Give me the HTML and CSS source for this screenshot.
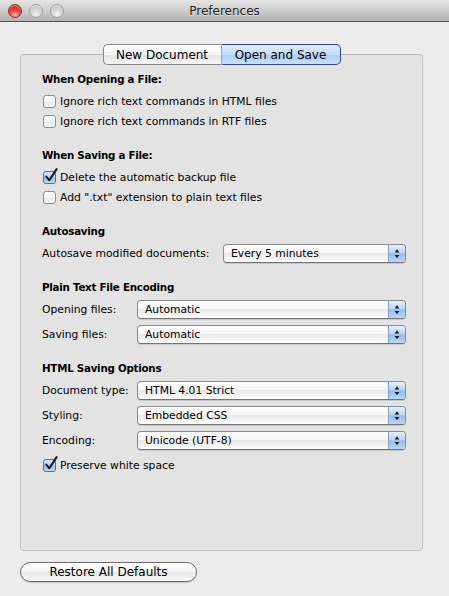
FILE: index.html
```html
<!DOCTYPE html>
<html lang="en">
<head>
<meta charset="utf-8">
<title>Preferences</title>
<link rel="stylesheet" href="styles.css">
</head>
<body>
<div class="window">
  <header class="titlebar">
    <div class="lights">
      <span class="light light-close"></span>
      <span class="light"></span>
      <span class="light"></span>
    </div>
    <div class="title">Preferences</div>
    <div></div>
  </header>

  <main class="content">
    <nav class="tabs">
      <span class="tab">New Document</span>
      <span class="tab tab-selected">Open and Save</span>
    </nav>

    <div class="group">
      <section class="section">
        <h2 class="heading">When Opening a File:</h2>
        <div class="check"><span class="box"></span><span>Ignore rich text commands in HTML files</span></div>
        <div class="check"><span class="box"></span><span>Ignore rich text commands in RTF files</span></div>
      </section>

      <section class="section">
        <h2 class="heading">When Saving a File:</h2>
        <div class="check"><span class="box box-on"><svg class="tick" viewBox="0 0 16 16"><path d="M3.2 8.6 L6.4 12.2 L13.6 1.2" /></svg></span><span>Delete the automatic backup file</span></div>
        <div class="check"><span class="box"></span><span>Add ".txt" extension to plain text files</span></div>
      </section>

      <section class="section">
        <h2 class="heading">Autosaving</h2>
        <div class="row">
          <span class="label label-wide">Autosave modified documents:</span>
          <div class="popup"><span class="popup-value">Every 5 minutes</span><span class="popup-arrows"><svg viewBox="0 0 16 18"><path d="M5.5 8 L8 4.5 L10.5 8 Z M5.5 10.5 L8 14 L10.5 10.5 Z"/></svg></span></div>
        </div>
      </section>

      <section class="section">
        <h2 class="heading">Plain Text File Encoding</h2>
        <div class="rows">
          <div class="row">
            <span class="label">Opening files:</span>
            <div class="popup"><span class="popup-value">Automatic</span><span class="popup-arrows"><svg viewBox="0 0 16 18"><path d="M5.5 8 L8 4.5 L10.5 8 Z M5.5 10.5 L8 14 L10.5 10.5 Z"/></svg></span></div>
          </div>
          <div class="row">
            <span class="label">Saving files:</span>
            <div class="popup"><span class="popup-value">Automatic</span><span class="popup-arrows"><svg viewBox="0 0 16 18"><path d="M5.5 8 L8 4.5 L10.5 8 Z M5.5 10.5 L8 14 L10.5 10.5 Z"/></svg></span></div>
          </div>
        </div>
      </section>

      <section class="section">
        <h2 class="heading">HTML Saving Options</h2>
        <div class="rows">
          <div class="row">
            <span class="label">Document type:</span>
            <div class="popup"><span class="popup-value">HTML 4.01 Strict</span><span class="popup-arrows"><svg viewBox="0 0 16 18"><path d="M5.5 8 L8 4.5 L10.5 8 Z M5.5 10.5 L8 14 L10.5 10.5 Z"/></svg></span></div>
          </div>
          <div class="row">
            <span class="label">Styling:</span>
            <div class="popup"><span class="popup-value">Embedded CSS</span><span class="popup-arrows"><svg viewBox="0 0 16 18"><path d="M5.5 8 L8 4.5 L10.5 8 Z M5.5 10.5 L8 14 L10.5 10.5 Z"/></svg></span></div>
          </div>
          <div class="row">
            <span class="label">Encoding:</span>
            <div class="popup"><span class="popup-value">Unicode (UTF-8)</span><span class="popup-arrows"><svg viewBox="0 0 16 18"><path d="M5.5 8 L8 4.5 L10.5 8 Z M5.5 10.5 L8 14 L10.5 10.5 Z"/></svg></span></div>
          </div>
          <div class="check"><span class="box box-on"><svg class="tick" viewBox="0 0 16 16"><path d="M3.2 8.6 L6.4 12.2 L13.6 1.2" /></svg></span><span>Preserve white space</span></div>
        </div>
      </section>
    </div>

    <div class="actions">
      <button class="button" type="button">Restore All Defaults</button>
    </div>
  </main>
</div>
</body>
</html>
```

FILE: styles.css
```css
* { box-sizing: border-box; }

html, body {
  margin: 0;
  padding: 0;
}

body {
  width: 449px;
  height: 596px;
  overflow: hidden;
  background: #ececec;
  font-family: "DejaVu Sans", "Liberation Sans", sans-serif;
  font-size: 10.75px;
  color: #000;
}

/* ---- title bar ---- */
.titlebar {
  height: 22px;
  display: grid;
  grid-template-columns: 1fr auto 1fr;
  align-items: center;
  background: linear-gradient(#e4e4e4 0%, #cfcfcf 45%, #b3b3b3 100%);
  border-bottom: 1px solid #575757;
}

.lights {
  display: flex;
  gap: 7px;
  padding-left: 8px;
}

.light {
  width: 14px;
  height: 14px;
  border-radius: 50%;
  border: 1px solid #9c9c9c;
  background: radial-gradient(circle at 50% 80%, #f2f2f2 0%, #d6d6d6 45%, #b9b9b9 100%);
  box-shadow: inset 0 1px 1px rgba(255,255,255,0.6);
}

.light-close {
  border-color: #8a2b2b;
  background: radial-gradient(circle at 50% 85%, #ffb7b4 0%, #f0413a 45%, #b0140f 100%);
}

.title {
  font-size: 12px;
  color: #1e1e1e;
  text-shadow: 0 1px 0 rgba(255,255,255,0.5);
}

/* ---- content ---- */
.content {
  padding: 22px 0 0 20px;
}

.tabs {
  position: relative;
  z-index: 1;
  width: 403px;
  display: flex;
  justify-content: center;
  margin-bottom: -11px;
}

.tab {
  width: 119px;
  height: 21px;
  display: flex;
  align-items: center;
  justify-content: center;
  font-size: 12px;
  background: linear-gradient(#ffffff 0%, #f3f3f3 50%, #e4e4e4 52%, #f6f6f6 100%);
  border: 1px solid #878787;
}

.tab:first-child {
  border-radius: 5px 0 0 5px;
  border-right: 1px solid #a9a9a9;
}

.tab-selected {
  border-radius: 0 5px 5px 0;
  border-color: #39448c;
  border-left: none;
  background: linear-gradient(#dcebfc 0%, #c2dcf8 50%, #a9cdf5 52%, #c6e1fb 100%);
}

.group {
  width: 403px;
  height: 497px;
  background: #e3e3e3;
  border: 1px solid #c4c4c4;
  border-top-color: #b8b8b8;
  border-radius: 4px;
  padding: 14px 16px 0 21px;
  display: flex;
  flex-direction: column;
  gap: 14px;
}

.heading {
  margin: 0 0 2px;
  height: 20px;
  line-height: 20px;
  font-size: 10.3px;
  letter-spacing: -0.25px;
  font-weight: bold;
}

.rows {
  display: flex;
  flex-direction: column;
  gap: 5px;
}

.check {
  height: 20px;
  display: flex;
  align-items: center;
  gap: 4px;
  padding-left: 1px;
}

.box {
  position: relative;
  width: 13px;
  height: 13px;
  flex: none;
  border: 1px solid #8f8f8f;
  border-radius: 3px;
  background: linear-gradient(#ffffff 0%, #f4f4f4 50%, #e6e6e6 55%, #fbfbfb 100%);
}

.box-on {
  border-color: #5a6c8c;
  background: linear-gradient(#d9e8f9 0%, #b3d0f1 50%, #94bdec 55%, #c0dcf8 100%);
}

.tick {
  position: absolute;
  left: -1px;
  top: -4px;
  width: 16px;
  height: 16px;
  overflow: visible;
}

.tick path {
  fill: none;
  stroke: #1a1a2a;
  stroke-width: 2.1;
  stroke-linecap: round;
  stroke-linejoin: round;
}

.row {
  height: 20px;
  display: flex;
  align-items: center;
}

.label {
  width: 95px;
  flex: none;
}

.label-wide {
  width: 181px;
}

.popup {
  flex: 1;
  height: 19px;
  display: flex;
  border: 1px solid #8b8b8b;
  border-bottom-color: #737373;
  border-radius: 4px;
  overflow: hidden;
  background: linear-gradient(#ffffff 0%, #f6f6f6 45%, #e9e9e9 50%, #f4f4f4 80%, #ffffff 100%);
  box-shadow: 0 1px 0 rgba(0,0,0,0.12);
}

.popup-value {
  flex: 1;
  display: flex;
  align-items: center;
  padding-left: 7px;
}

.popup-arrows {
  width: 17px;
  flex: none;
  border-left: 1px solid #8a9cb8;
  background: linear-gradient(#e2eefc 0%, #bcd6f5 45%, #93bdf0 52%, #b8d7f8 100%);
}

.popup-arrows svg {
  display: block;
  width: 16px;
  height: 17px;
}

.popup-arrows path {
  fill: #1b1b1b;
}

/* ---- bottom button ---- */
.actions {
  margin-top: 11px;
}

.button {
  width: 177px;
  height: 20px;
  padding: 0;
  border: 1px solid #6c6c6c;
  border-radius: 10px;
  font-family: inherit;
  font-size: 12px;
  color: #000;
  background: linear-gradient(#ffffff 0%, #f6f6f6 45%, #e8e8e8 55%, #f9f9f9 100%);
  box-shadow: 0 1px 1px rgba(0,0,0,0.15);
}
```
